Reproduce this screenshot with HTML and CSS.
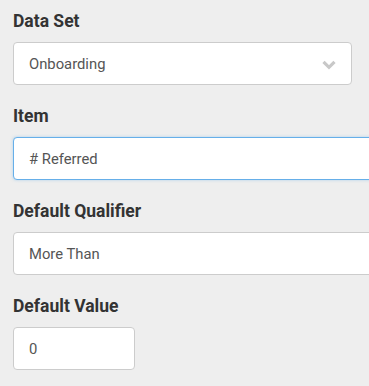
FILE: index.html
```html
<!DOCTYPE html>
<html>
<head>
<meta charset="utf-8">
<link rel="stylesheet" href="styles.css">
</head>
<body>
<div class="form">
  <div class="group">
    <div class="label">Data Set</div>
    <div class="control select">
      <span class="value">Onboarding</span>
      <svg class="chev" width="14" height="10" viewBox="0 0 14 10"><path d="M1.5 1.8 L7 7.3 L12.5 1.8" fill="none" stroke="#c8c8c8" stroke-width="3.2"/></svg>
    </div>
  </div>
  <div class="group">
    <div class="label">Item</div>
    <div class="control wide focus"><span class="value"># Referred</span></div>
  </div>
  <div class="group">
    <div class="label">Default Qualifier</div>
    <div class="control wide"><span class="value">More Than</span></div>
  </div>
  <div class="group">
    <div class="label">Default Value</div>
    <div class="control small"><span class="value">0</span></div>
  </div>
</div>
</body>
</html>
```

FILE: styles.css
```css
html, body {
  margin: 0;
  padding: 0;
  background: #eeeeee;
  overflow: hidden;
}
body {
  font-family: Roboto, "Liberation Sans", sans-serif;
  color: #333333;
}
.form {
  padding: 10px 0 0 13px;
  display: flex;
  flex-direction: column;
  gap: 20px;
}
.group {
  display: flex;
  flex-direction: column;
  gap: 10px;
}
.label {
  font-size: 17.5px;
  font-weight: 700;
  line-height: 22px;
  color: #333333;
}
.control {
  box-sizing: border-box;
  height: 43px;
  background: #ffffff;
  border: 1px solid #cccccc;
  border-radius: 4px;
  display: flex;
  align-items: center;
  justify-content: space-between;
  padding: 1px 15px 0 15px;
  font-size: 14.8px;
  color: #555555;
}
.select {
  width: 339px;
  padding-right: 15px;
}
.wide {
  width: 420px;
}
.small {
  width: 122px;
}
.focus {
  border-color: #66afe9;
  box-shadow: 0 0 3px rgba(102, 175, 233, 0.5);
}
.chev {
  display: block;
  margin-top: 1px;
}
```
